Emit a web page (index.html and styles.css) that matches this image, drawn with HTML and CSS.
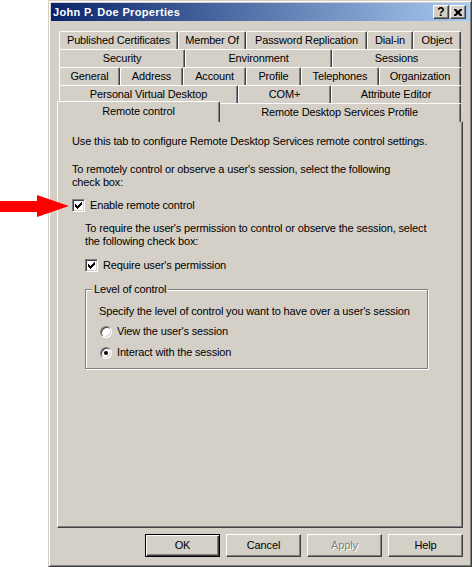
FILE: index.html
```html
<!DOCTYPE html>
<html>
<head>
<meta charset="utf-8">
<title>John P. Doe Properties</title>
<link rel="stylesheet" href="styles.css">
</head>
<body>
<div class="window">
  <div class="titlebar">
    <span class="title">John P. Doe Properties</span>
    <span class="capbtns">
      <span class="capbtn help">?</span>
      <span class="capbtn close"><svg width="8" height="7" viewBox="0 0 8 7"><path d="M0 0h2l2 2 2-2h2v1l-2 2v1l2 2v1h-2l-2-2-2 2h-2v-1l2-2v-1l-2-2z" fill="#000"/></svg></span>
    </span>
  </div>
  <div class="dialog">
    <div class="tabs">
      <div class="tabrow r1">
        <div class="tab">Published Certificates</div>
        <div class="tab">Member Of</div>
        <div class="tab">Password Replication</div>
        <div class="tab">Dial-in</div>
        <div class="tab">Object</div>
      </div>
      <div class="tabrow r2">
        <div class="tab">Security</div>
        <div class="tab">Environment</div>
        <div class="tab">Sessions</div>
      </div>
      <div class="tabrow r3">
        <div class="tab">General</div>
        <div class="tab">Address</div>
        <div class="tab">Account</div>
        <div class="tab">Profile</div>
        <div class="tab">Telephones</div>
        <div class="tab">Organization</div>
      </div>
      <div class="tabrow r4">
        <div class="tab">Personal Virtual Desktop</div>
        <div class="tab">COM+</div>
        <div class="tab">Attribute Editor</div>
      </div>
      <div class="tabrow r5">
        <div class="tab selected">Remote control</div>
        <div class="tab">Remote Desktop Services Profile</div>
      </div>
    </div>
    <div class="panel">
      <p class="p1">Use this tab to configure Remote Desktop Services remote control settings.</p>
      <p class="p2">To remotely control or observe a user's session, select the following<br>check box:</p>
      <div class="check c1"><span class="box"><svg width="13" height="13" viewBox="0 0 13 13"><path d="M9 3h1v1h-1z M8 4h2v1h-2z M3 5h1v1h-1z M7 5h3v1h-3z M3 6h2v1h-2z M6 6h3v1h-3z M3 7h5v1h-5z M4 8h3v1h-3z M5 9h1v1h-1z" fill="#000"/></svg></span>Enable remote control</div>
      <div class="sub">
        <p class="p3">To require the user's permission to control or observe the session, select<br>the following check box:</p>
        <div class="check c2"><span class="box"><svg width="13" height="13" viewBox="0 0 13 13"><path d="M9 3h1v1h-1z M8 4h2v1h-2z M3 5h1v1h-1z M7 5h3v1h-3z M3 6h2v1h-2z M6 6h3v1h-3z M3 7h5v1h-5z M4 8h3v1h-3z M5 9h1v1h-1z" fill="#000"/></svg></span>Require user's permission</div>
        <fieldset class="group">
          <legend>Level of control</legend>
          <p class="spec">Specify the level of control you want to have over a user's session</p>
          <div class="radio ra"><span class="rb"></span>View the user's session</div>
          <div class="radio rbb"><span class="rb on"></span>Interact with the session</div>
        </fieldset>
      </div>
    </div>
    <div class="buttons">
      <div class="btn default">OK</div>
      <div class="btn">Cancel</div>
      <div class="btn disabled">Apply</div>
      <div class="btn">Help</div>
    </div>
  </div>
</div>
<svg class="arrow" width="72" height="30" viewBox="0 190 72 30"><polygon points="0,201 37,201 37,195 69,206 37,217 37,212 0,212" fill="#ff0000"/></svg>
</body>
</html>
```
FILE: styles.css
```css
html, body {
  margin: 0;
  padding: 0;
}
body {
  width: 472px;
  height: 567px;
  overflow: hidden;
  background: #ffffff;
  font-family: "Liberation Sans", Arial, sans-serif;
  font-size: 11px;
  letter-spacing: -0.15px;
  color: #000;
  position: relative;
}
.window {
  margin-left: 48px;
  width: 424px;
  height: 567px;
  box-sizing: border-box;
  background: #d4d0c8;
  border: 1px solid;
  border-color: #d4d0c8 #404040 #404040 #d4d0c8;
  box-shadow: inset 1px 1px #ffffff, inset -1px -1px #808080;
  padding: 2px;
}
.titlebar {
  height: 18px;
  display: flex;
  align-items: center;
  justify-content: space-between;
  background: linear-gradient(to right, #0a246a, #a6caf0);
  padding-left: 2px;
  padding-right: 3px;
}
.title {
  color: #fff;
  font-weight: bold;
  font-size: 11px;
  letter-spacing: 0.35px;
  line-height: 13px;
}
.capbtns {
  display: flex;
  gap: 1px;
}
.capbtn {
  width: 16px;
  height: 14px;
  box-sizing: border-box;
  background: #d4d0c8;
  border: 1px solid;
  border-color: #ffffff #404040 #404040 #ffffff;
  box-shadow: inset -1px -1px #808080;
  display: flex;
  align-items: center;
  justify-content: center;
  font-weight: bold;
  font-size: 12px;
  letter-spacing: 0;
  line-height: 12px;
}
.capbtn.close svg {
  display: block;
}
.dialog {
  padding: 0 6px;
}
.tabs {
  margin: 10px 2px 0;
}
.tabrow {
  display: grid;
  height: 18px;
}
.r1 { grid-template-columns: 119px 68px 121px 46px 48px; }
.r2 { grid-template-columns: 126px 147px 129px; }
.r3 { grid-template-columns: 61px 63px 63px 55px 78px 82px; }
.r4 { grid-template-columns: 179px 93px 130px; }
.r5 { grid-template-columns: 159px 243px; }
.tab {
  box-sizing: border-box;
  border-top: 1px solid #ffffff;
  border-left: 1px solid #ffffff;
  border-right: 1px solid #404040;
  box-shadow: inset -1px 0 #808080;
  border-radius: 2px 2px 0 0;
  text-align: center;
  line-height: 16px;
  white-space: nowrap;
  background: #d4d0c8;
}
.tab.selected {
  position: relative;
  z-index: 1;
  margin: -2px -2px 0;
  height: 21px;
  line-height: 18px;
}
.panel {
  height: 407px;
  box-sizing: border-box;
  border: 1px solid;
  border-color: #ffffff #404040 #404040 #ffffff;
  box-shadow: inset -1px -1px #808080;
  padding: 13px 14px 0;
}
.panel p {
  margin: 0;
  line-height: 13px;
  white-space: nowrap;
}
.p2 { margin-top: 15px !important; }
.check {
  display: flex;
  align-items: center;
  height: 13px;
  line-height: 13px;
  gap: 5px;
}
.c1 { margin-top: 10px; }
.box {
  width: 13px;
  height: 13px;
  box-sizing: border-box;
  background: #fff;
  border: 1px solid;
  border-color: #808080 #ffffff #ffffff #808080;
  box-shadow: inset 1px 1px #404040, inset -1px -1px #d4d0c8;
  flex: none;
}
.box svg {
  display: block;
  margin: -1px;
}
.sub {
  margin-left: 13px;
}
.p3 { margin-top: 10px !important; }
.c2 { margin-top: 11px; }
.group {
  margin: 11px 0 0;
  width: 343px;
  box-sizing: border-box;
  border: 1px solid #808080;
  box-shadow: inset 1px 1px #ffffff, 1px 1px #ffffff;
  padding: 9px 0 9px 6px;
  min-width: 0;
}
.group legend {
  padding: 0 2px;
  line-height: 13px;
  background: #d4d0c8;
}
.spec {
  margin-left: 7px !important;
}
.radio {
  display: flex;
  align-items: center;
  height: 13px;
  line-height: 13px;
  gap: 5px;
  margin-left: 8px;
}
.ra { margin-top: 7px; }
.rbb { margin-top: 8px; }
.rb {
  width: 12px;
  height: 12px;
  box-sizing: border-box;
  border-radius: 50%;
  background: #fff;
  border: 1px solid;
  border-color: #808080 #ffffff #ffffff #808080;
  box-shadow: inset 1px 1px #404040, inset -1px -1px #d4d0c8;
  display: flex;
  align-items: center;
  justify-content: center;
  flex: none;
}
.rb.on::after {
  content: "";
  width: 4px;
  height: 4px;
  border-radius: 50%;
  background: #000;
}
.buttons {
  display: flex;
  justify-content: flex-end;
  gap: 6px;
  margin-top: 6px;
}
.btn {
  width: 75px;
  height: 23px;
  box-sizing: border-box;
  border: 1px solid;
  border-color: #ffffff #404040 #404040 #ffffff;
  box-shadow: inset -1px -1px #808080;
  background: #d4d0c8;
  display: flex;
  align-items: center;
  justify-content: center;
  line-height: 13px;
}
.btn.default {
  border-color: #000;
  box-shadow: inset 1px 1px #ffffff, inset -1px -1px #404040, inset -2px -2px #808080;
}
.btn.disabled {
  color: #808080;
  text-shadow: 1px 1px 0 #ffffff;
}
.arrow {
  position: absolute;
  left: 0;
  top: 190px;
}
```
